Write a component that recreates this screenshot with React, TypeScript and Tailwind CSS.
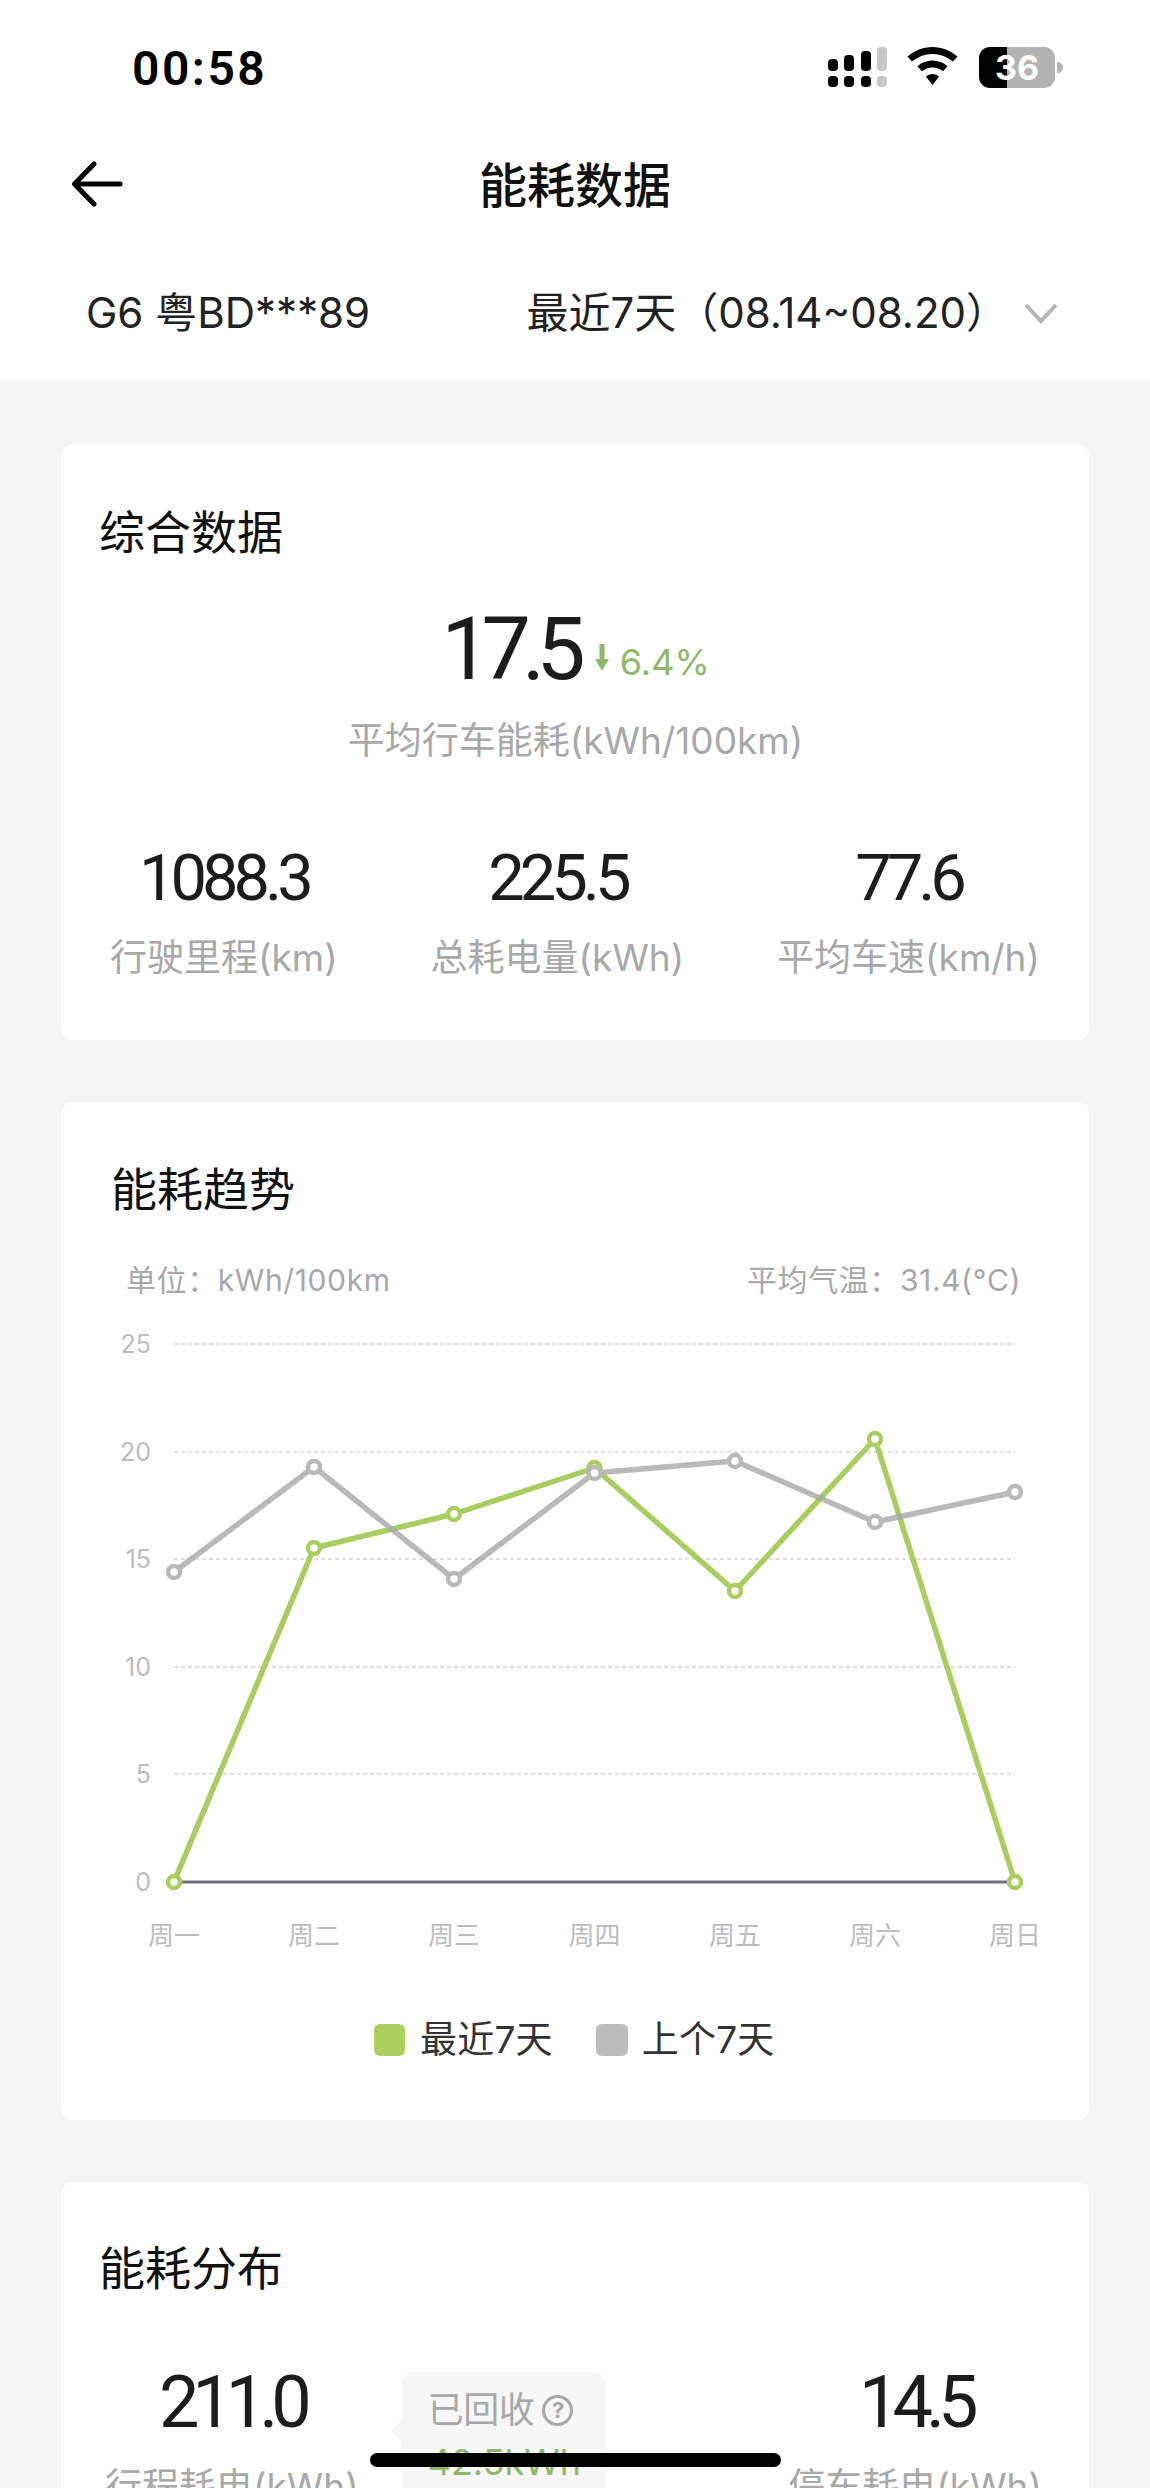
const CJK = "font-['Inter','Noto_Sans_CJK_SC',sans-serif]";

// chart coordinates are page pixels minus the svg's origin (61, 1320)
const xs = [113, 253, 393, 533.5, 674, 814, 954];
const green = [562, 228, 194, 148, 271, 119, 562];
const gray = [252, 147, 259, 153, 141, 202, 172];
const gridY = [
  { label: "25", y: 24 },
  { label: "20", y: 132 },
  { label: "15", y: 239 },
  { label: "10", y: 347 },
  { label: "5", y: 454 },
  { label: "0", y: 562 },
];
const days = ["周一", "周二", "周三", "周四", "周五", "周六", "周日"];

const points = (ys: number[]) => ys.map((y, i) => `${xs[i]},${y}`).join(" ");

function StatusBar() {
  return (
    <div className="flex h-[136px] items-start justify-between pt-[41px] pr-[87px] pl-[132px]">
      <span className="font-['Roboto'] text-[48px] leading-[56px] font-semibold tracking-[2.5px] text-black">00:58</span>
      <div className="mt-[6px] flex items-start">
        {/* signal */}
        <svg width="59" height="40" viewBox="0 0 59 40" className="mr-[20px]">
          <rect x="0" y="12" width="10" height="12" rx="4" />
          <rect x="16" y="8" width="10" height="16" rx="4" />
          <rect x="33" y="4" width="10" height="20" rx="4" />
          <rect x="49" y="0" width="10" height="24" rx="4" fill="#c8c8c8" />
          <rect x="0" y="29" width="10" height="11" rx="4" />
          <rect x="16" y="29" width="10" height="11" rx="4" />
          <rect x="33" y="29" width="10" height="11" rx="4" />
          <rect x="49" y="29" width="10" height="11" rx="4" fill="#c8c8c8" />
        </svg>
        {/* wifi */}
        <svg width="51" height="38" viewBox="0 0 51 38" className="mr-[21px]">
          <path d="M25.5 0C16 0 7.4 3.6 0.5 9.6L5 14.6C10.6 9.8 17.7 6.9 25.5 6.9S40.4 9.8 46 14.6L50.5 9.6C43.6 3.6 35 0 25.5 0Z" />
          <path d="M25.5 13.5C19.8 13.5 14.6 15.6 10.4 19.2L15 24.2C17.9 21.8 21.5 20.4 25.5 20.4S33.1 21.8 36 24.2L40.6 19.2C36.4 15.6 31.2 13.5 25.5 13.5Z" />
          <path d="M25.5 27C23 27 20.7 27.9 18.8 29.4L25.5 38L32.2 29.4C30.3 27.9 28 27 25.5 27Z" />
        </svg>
        {/* battery */}
        <div className="flex items-center">
          <div className="flex h-[41px] w-[76px] items-center justify-center rounded-[11px] bg-[linear-gradient(90deg,#000_37%,#b3b3b3_37%)] font-['Inter'] text-[34px] leading-none font-bold text-white">
            36
          </div>
          <div className="ml-[2px] h-[11px] w-[6px] rounded-r-full bg-[#b3b3b3]" />
        </div>
      </div>
    </div>
  );
}

function Stat({ value, label, size }: { value: string; label: string; size: "md" | "lg" }) {
  return (
    <div className="flex flex-col items-center">
      <div
        className={
          size === "md"
            ? "font-['Roboto'] text-[65px] leading-[76px] font-normal tracking-[-5px] text-[#1c1c1c]"
            : "font-['Roboto'] text-[72px] leading-[84px] font-normal tracking-[-7px] text-[#1c1c1c]"
        }
      >
        {value}
      </div>
      <div className="mt-[18px] text-[37px] leading-[48px] whitespace-nowrap text-[#a8a8a8]">{label}</div>
    </div>
  );
}

function Card({ title, className, children }: { title: string; className: string; children: React.ReactNode }) {
  return (
    <section className={`rounded-[12px] bg-white ${className}`}>
      <h2 className="text-[46px] leading-[60px] font-normal text-[#111]">{title}</h2>
      {children}
    </section>
  );
}

function TrendChart() {
  return (
    <svg width="1028" height="640" viewBox="0 0 1028 640" className="mt-[20px] block" fontFamily="Inter, 'Noto Sans CJK SC', sans-serif">
      {gridY.map((g) => (
        <g key={g.label}>
          <text x="90" y={g.y + 9} textAnchor="end" fontSize="25" fill="#bdbdbd">
            {g.label}
          </text>
          {g.y !== 562 && (
            <line x1="113" x2="954" y1={g.y} y2={g.y} stroke="#d8d8d8" strokeWidth="1.5" strokeDasharray="4 3" />
          )}
        </g>
      ))}
      <polyline points={points(green)} fill="none" stroke="#a9cd5e" strokeWidth="5.5" strokeLinejoin="round" />
      <polyline points={points(gray)} fill="none" stroke="#a8a8a8" strokeOpacity="0.8" strokeWidth="5.5" strokeLinejoin="round" />
      <line x1="113" x2="954" y1="562" y2="562" stroke="#70737f" strokeWidth="3" />
      {green.map((y, i) => (
        <circle key={i} cx={xs[i]} cy={y} r="6" fill="#fff" stroke="#a9cd5e" strokeWidth="4.5" />
      ))}
      {gray.map((y, i) => (
        <circle key={i} cx={xs[i]} cy={y} r="6" fill="#fff" stroke="#b9b9b9" strokeWidth="4.5" />
      ))}
      {days.map((d, i) => (
        <text key={d} x={xs[i]} y="625" textAnchor="middle" fontSize="26" fill="#bdbdbd">
          {d}
        </text>
      ))}
    </svg>
  );
}

export default function App() {
  return (
    <div className={`relative h-[2488px] w-[1150px] overflow-hidden bg-[#f6f6f6] ${CJK}`}>
      <header className="h-[380px] bg-white">
        <StatusBar />
        <div className="relative flex h-[96px] items-center justify-center pt-[3px]">
          <svg width="52" height="46" viewBox="0 0 52 46" className="absolute top-[25px] left-[71px]" fill="none" stroke="#000" strokeWidth="5" strokeLinecap="round" strokeLinejoin="round">
            <path d="M49 23H4" />
            <path d="M23 3L3.5 23L23 43" />
          </svg>
          <h1 className="text-[48px] leading-none font-medium text-[#111]">能耗数据</h1>
        </div>
        <div className="flex h-[148px] items-start justify-between pt-[52px] pr-[92px] pl-[86px] text-[42px] leading-[58px] text-[#222]">
          <span>G6 粤BD***89</span>
          <div className="flex items-center">
            <span>最近7天（08.14~08.20）</span>
            <svg width="34" height="22" viewBox="0 0 34 22" className="ml-[16px]" fill="none" stroke="#b5b5b5" strokeWidth="4">
              <path d="M2 3L17 19L32 3" />
            </svg>
          </div>
        </div>
      </header>

      <main className="flex flex-col gap-[62px] px-[61px] pt-[64px]">
        <Card title="综合数据" className="h-[596px] pt-[58px] pr-[49px] pl-[38px]">
          <div className="mt-[35px] flex flex-col items-center pl-[12px]">
            <div className="flex items-end">
              <span className="font-['Roboto'] text-[88px] leading-[104px] font-normal tracking-[-9px] text-[#1c1c1c]">17.5</span>
              <svg width="14" height="27" viewBox="0 0 14 27" className="mb-[30px] ml-[18px]" fill="#8fb867">
                <path d="M4.5 0H9.5V15H14L7 27L0 15H4.5Z" />
              </svg>
              <span className="mb-[19px] ml-[11px] text-[36px] leading-[40px] text-[#8fb867]">6.4%</span>
            </div>
            <div className="mt-[16px] text-[37px] leading-[48px] text-[#a8a8a8]">平均行车能耗(kWh/100km)</div>
          </div>
          <div className="mt-[75px] flex justify-between pl-[11px]">
            <Stat value="1088.3" label="行驶里程(km)" size="md" />
            <Stat value="225.5" label="总耗电量(kWh)" size="md" />
            <Stat value="77.6" label="平均车速(km/h)" size="md" />
          </div>
        </Card>

        <Card title="能耗趋势" className="h-[1018px] pt-[57px] pl-[50px]">
          <div className="-ml-[50px]">
            <div className="mt-[41px] flex justify-between pr-[68px] pl-[65px] text-[30px] leading-[40px] tracking-[0.6px] text-[#a8a8a8]">
              <span>单位：kWh/100km</span>
              <span>平均气温：31.4(°C)</span>
            </div>
            <TrendChart />
            <div className="mt-[58px] flex items-center pl-[313px] text-[37px] leading-[44px] tracking-[0.2px] text-[#333]">
              <span className="h-[32px] w-[31px] rounded-[6px] bg-[#aed05f]" />
              <span className="ml-[15px]">最近7天</span>
              <span className="ml-[43px] h-[32px] w-[32px] rounded-[6px] bg-[#bcbcbc]" />
              <span className="ml-[14px]">上个7天</span>
            </div>
          </div>
        </Card>

        <Card title="能耗分布" className="h-[400px] pt-[56px] pl-[38px]">
          <div className="mt-[63px] -ml-[38px] flex items-start pr-[47px] pl-[44px]">
            <Stat value="211.0" label="行程耗电(kWh)" size="lg" />
            <div className="relative mt-[11px] ml-[43px] h-[200px] w-[203px] rounded-[12px] bg-[#f7f7f7] pt-[16px] pl-[26px]">
              <div className="absolute top-[50px] -left-[7px] size-[18px] rotate-45 rounded-[3px] bg-[#f7f7f7]" />
              <div className="relative flex items-center text-[36px] leading-[44px] tracking-[-0.4px] text-[#a8a8a8]">
                已回收
                <span className="ml-[8px] flex size-[31px] shrink-0 items-center justify-center rounded-full border-[3px] border-[#a8a8a8] text-[22px] leading-none font-bold">?</span>
              </div>
              <div className="relative mt-[8px] text-[36px] leading-[44px] text-[#8fb867]">42.5kWh</div>
            </div>
            <div className="ml-auto">
              <Stat value="14.5" label="停车耗电(kWh)" size="lg" />
            </div>
          </div>
        </Card>
      </main>

      <div className="absolute top-[2453px] left-[370px] h-[14px] w-[411px] rounded-full bg-black" />
    </div>
  );
}
